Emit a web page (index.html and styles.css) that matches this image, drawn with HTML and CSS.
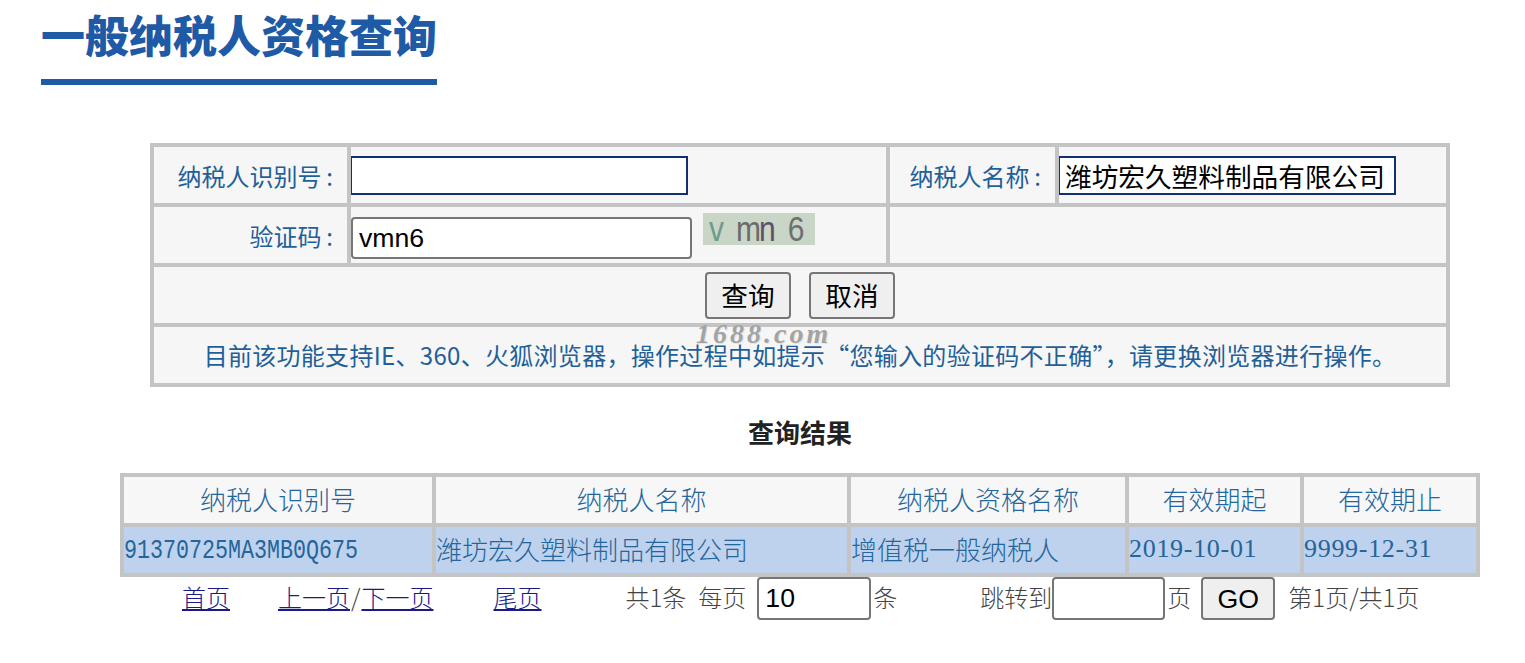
FILE: index.html
```html
<!DOCTYPE html>
<html lang="zh-CN">
<head>
<meta charset="utf-8">
<title>一般纳税人资格查询</title>
<link rel="stylesheet" href="styles.css">
</head>
<body>
<header class="head"><h1 class="title">一般纳税人资格查询</h1></header>
<section class="form-wrap">
  <table class="form-table">
    <colgroup><col class="fc1"><col class="fc2"><col class="fc3"><col class="fc4"></colgroup>
    <tr>
      <td class="label">纳税人识别号&thinsp;:</td>
      <td><input class="text focus" type="text"></td>
      <td class="label">纳税人名称&thinsp;:</td>
      <td><input class="text focus name" type="text" value="潍坊宏久塑料制品有限公司"></td>
    </tr>
    <tr>
      <td class="label">验证码&thinsp;:</td>
      <td><div class="code-row"><input class="text code" type="text" value="vmn6">
        <div class="captcha"><span class="c1">v</span><span class="c2">m</span><span class="c3">n</span><span class="c4">6</span></div></div></td>
      <td colspan="2"></td>
    </tr>
    <tr>
      <td colspan="4" class="actions"><button class="btn" type="button">查询</button><button class="btn" type="button">取消</button></td>
    </tr>
    <tr>
      <td colspan="4" class="notice">目前该功能支持IE、360、火狐浏览器&#xFF0C;操作过程中如提示“您输入的验证码不正确”&#xFF0C;请更换浏览器进行操作。</td>
    </tr>
  </table>
  <div class="watermark">1688.com</div>
</section>
<h2 class="result-title">查询结果</h2>
<table class="result-table">
  <colgroup><col class="rc1"><col class="rc2"><col class="rc3"><col class="rc4"><col class="rc5"></colgroup>
  <tr class="hrow"><th>纳税人识别号</th><th>纳税人名称</th><th>纳税人资格名称</th><th>有效期起</th><th>有效期止</th></tr>
  <tr class="drow"><td><span class="mono">91370725MA3MB0Q675</span></td><td>潍坊宏久塑料制品有限公司</td><td>增值税一般纳税人</td><td class="date">2019-10-01</td><td class="date">9999-12-31</td></tr>
</table>
<nav class="pager">
  <a class="p-first" href="#">首页</a>
  <span class="p-prev"><a href="#">上一页</a><span class="slash">/</span><a href="#">下一页</a></span>
  <a class="p-last" href="#">尾页</a>
  <span class="p-total">共1条</span>
  <span class="p-size">每页</span>
  <input class="pinput p-sizein" type="text" value="10">
  <span class="p-unit">条</span>
  <span class="p-jump">跳转到</span>
  <input class="pinput p-jumpin" type="text">
  <span class="p-unit">页</span>
  <button class="go" type="button">GO</button>
  <span class="p-info">第1页/共1页</span>
</nav>
</body>
</html>
```
FILE: styles.css
```css
* { box-sizing: border-box; }
html, body { margin: 0; padding: 0; background: #fff; }
body { font-family: "Liberation Serif", "Noto Sans CJK SC", serif; color: #444; overflow: hidden; }
.head { padding: 0 0 0 41px; height: 143px; }
.title {
  display: inline-block; margin: 0; height: 85px; width: 396px; padding-top: 6px;
  font: 900 44px/56px "Noto Sans CJK SC", sans-serif; letter-spacing: 0;
  color: #1f5aa6; border-bottom: 6px solid #1f5aa6; white-space: nowrap;
}
.form-wrap { position: relative; height: 243px; }
table { border-collapse: collapse; table-layout: fixed; }
.form-table { margin-left: 150px; width: 1296px; background: #f6f6f6; font: 400 24px/32px "Noto Sans CJK SC", sans-serif; color: #1f6099; }
.form-table td { border: 4px solid #c4c4c4; padding: 0; height: 60px; }
.fc1 { width: 197px; } .fc2 { width: 539px; } .fc3 { width: 169px; } .fc4 { width: 391px; }
.form-table .label { text-align: right; padding: 2px 14px 0 0; }
.text { display: block; margin: 0; padding: 0 6px; background: #fff; color: #000; font: 400 26.67px/34px "Liberation Sans", "Noto Sans CJK SC", sans-serif; outline: none; }
.focus { width: 338px; height: 39px; border: 2px solid #12306e; border-radius: 0; margin-left: -1px; }
.name { padding: 0 5px; }
.code-row { display: flex; align-items: flex-start; height: 56px; }
.code { width: 341px; height: 42px; margin-top: 10px; border: 2px solid #767676; border-radius: 4px; }
.captcha { display: flex; align-items: center; width: 112px; height: 32px; margin: 6px 0 0 11px; padding-left: 6px; background: #c9d5c6; font: 400 30px/32px "Liberation Sans", sans-serif; color: #777; }
.captcha span { display: inline-block; transform: scaleY(1.15); }
.c1 { color: #6c9c8c; margin-right: 12px; }
.c2 { color: #6b6b6b; margin-right: -2px; }
.c3 { color: #5d5068; margin-right: 12px; }
.c4 { color: #6d7070; }
.actions { text-align: center; }
.btn { width: 86px; height: 47px; padding: 0; margin: 0 9px; background: #efefef; color: #000; border: 2px solid #767676; border-radius: 4px; font: 400 26.67px/34px "Noto Sans CJK SC", sans-serif; }
.notice { text-align: center; white-space: nowrap; letter-spacing: .3px; }
.watermark { position: absolute; left: 696px; top: 177px; font: italic 700 28px/28px "Liberation Serif", serif; letter-spacing: 3px; color: #a3a3a3; text-shadow: 1px 1px 0 #e4e4e4; }
.result-title { margin: 0; height: 87px; padding-top: 28px; text-align: center; width: 1600px; font: 700 26px/36px "Noto Sans CJK SC", sans-serif; color: #222; letter-spacing: 0; }
.result-table { margin-left: 120px; width: 1356px; font: 300 26px/34px "Noto Sans CJK SC", serif; color: #24659b; }
.result-table th, .result-table td { border: 4px solid #c4c4c4; padding: 0 0 2px; height: 50px; font-weight: 300; }
.rc1 { width: 312px; } .rc2 { width: 415px; } .rc3 { width: 278px; } .rc4 { width: 175px; } .rc5 { width: 176px; }
.hrow th { background: #f7f7f7; text-align: center; }
.drow td { background: #bed2ee; text-align: left; white-space: nowrap; }
.mono { display: inline-block; font-family: "Liberation Mono", monospace; font-size: 21.67px; transform: scaleY(1.25); }
.date { font-family: "Liberation Serif", serif; letter-spacing: .7px; }
.pager { display: flex; align-items: center; height: 43px; padding-left: 182px; font: 300 24px/30px "Noto Sans CJK SC", serif; white-space: nowrap; }
.pager > a, .pager > span { margin-bottom: 4px; }
.pager a { color: #1a1a8c; }
.slash { padding: 0 1px; }
.p-prev { margin-left: 48px; }
.p-last { margin-left: 60px; }
.p-total { margin-left: 84px; }
.p-size { margin-left: 12px; }
.pinput { margin: 0; padding: 0 6px; height: 43px; width: 114px; background: #fff; color: #000; border: 2px solid #767676; border-radius: 4px; font: 400 26.67px/34px "Liberation Sans", sans-serif; }
.p-sizein { margin-left: 11px; }
.p-unit { margin-left: 2px; }
.p-jump { margin-left: 83px; }
.p-jumpin { margin-left: 0; width: 113px; }
.go { margin: 0 0 0 10px; padding: 0; width: 74px; height: 43px; background: #efefef; color: #000; border: 2px solid #767676; border-radius: 4px; font: 400 26.67px/34px "Liberation Sans", sans-serif; }
.p-info { margin-left: 13px; }
```
